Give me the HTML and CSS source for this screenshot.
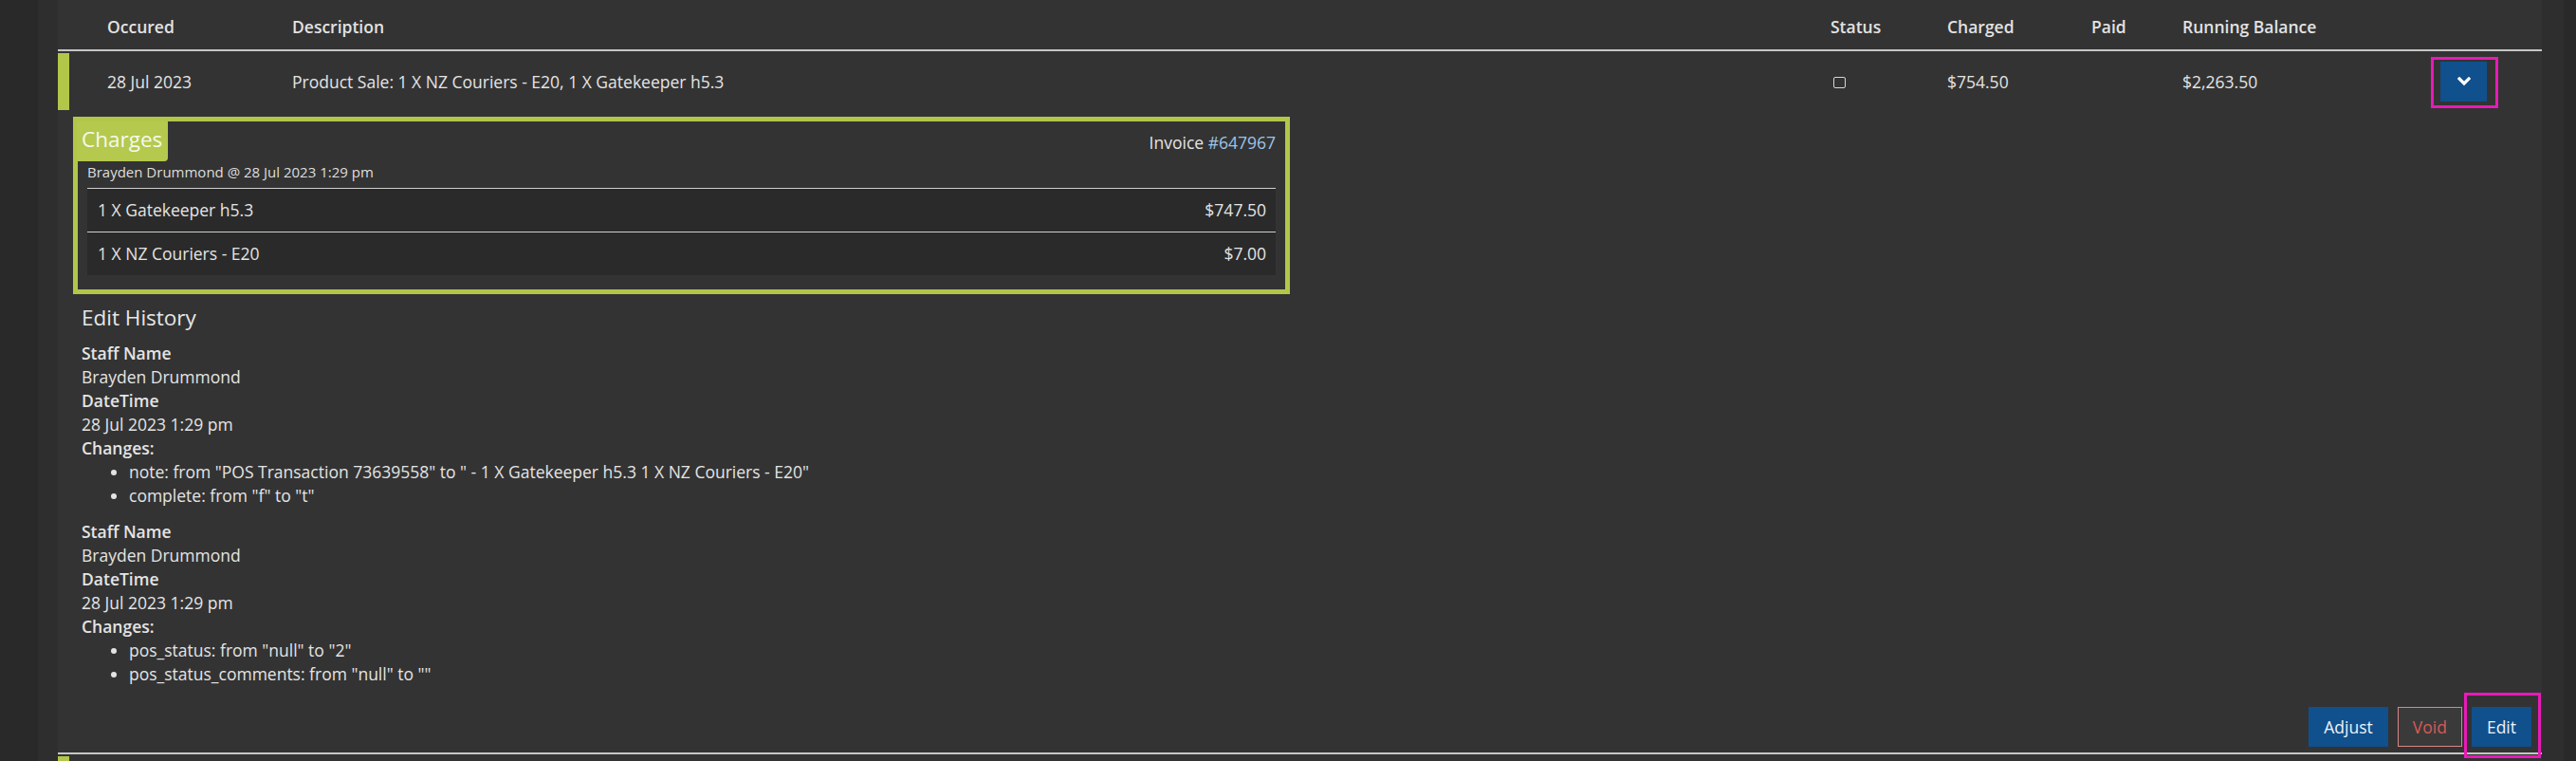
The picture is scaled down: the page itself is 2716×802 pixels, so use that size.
FILE: index.html
```html
<!DOCTYPE html>
<html lang="en">
<head>
<meta charset="utf-8">
<title>Ledger</title>
<link rel="stylesheet" href="styles.css">
</head>
<body>
<div class="page">
  <div class="gutter gutter-outer"></div>
  <div class="gutter gutter-inner"></div>
  <main class="panel">
    <div class="ledger-grid ledger-head">
      <span></span><span></span>
      <span>Occured</span>
      <span>Description</span>
      <span>Status</span>
      <span>Charged</span>
      <span>Paid</span>
      <span>Running Balance</span>
      <span></span>
    </div>

    <div class="entry">
      <div class="ledger-grid entry-row">
        <span class="entry-bar"></span><span></span>
        <span>28 Jul 2023</span>
        <span>Product Sale: 1 X NZ Couriers - E20, 1 X Gatekeeper h5.3</span>
        <span class="status"><span class="checkbox"></span></span>
        <span>$754.50</span>
        <span></span>
        <span>$2,263.50</span>
        <span class="action">
          <button class="btn btn-primary btn-toggle highlight highlight-toggle" type="button" aria-label="Collapse">
            <svg width="14" height="10" viewBox="0 0 14 10"><polyline points="2,2 7,7 12,2" fill="none" stroke="#ffffff" stroke-width="3.2" stroke-linecap="square"/></svg>
          </button>
        </span>
      </div>

      <div class="entry-detail">
        <section class="charges">
          <div class="charges-head">
            <span class="charges-label">Charges</span>
            <span class="invoice">Invoice <a href="#" class="invoice-link">#647967</a></span>
          </div>
          <div class="charges-meta">Brayden Drummond @ 28 Jul 2023 1:29 pm</div>
          <div class="charge-line"><span>1 X Gatekeeper h5.3</span><span>$747.50</span></div>
          <div class="charge-line"><span>1 X NZ Couriers - E20</span><span>$7.00</span></div>
        </section>

        <section class="history">
          <h3 class="history-title">Edit History</h3>
          <div class="history-item">
            <div class="history-label">Staff Name</div>
            <div>Brayden Drummond</div>
            <div class="history-label">DateTime</div>
            <div>28 Jul 2023 1:29 pm</div>
            <div class="history-label">Changes:</div>
            <ul class="history-changes">
              <li>note: from "POS Transaction 73639558" to " - 1 X Gatekeeper h5.3 1 X NZ Couriers - E20"</li>
              <li>complete: from "f" to "t"</li>
            </ul>
          </div>
          <div class="history-item">
            <div class="history-label">Staff Name</div>
            <div>Brayden Drummond</div>
            <div class="history-label">DateTime</div>
            <div>28 Jul 2023 1:29 pm</div>
            <div class="history-label">Changes:</div>
            <ul class="history-changes">
              <li>pos_status: from "null" to "2"</li>
              <li>pos_status_comments: from "null" to ""</li>
            </ul>
          </div>
        </section>

        <div class="entry-actions">
          <button class="btn btn-primary" type="button">Adjust</button>
          <button class="btn btn-void" type="button">Void</button>
          <button class="btn btn-primary highlight highlight-edit" type="button">Edit</button>
        </div>
      </div>
    </div>

    <div class="entry">
      <div class="ledger-grid entry-row">
        <span class="entry-bar"></span>
      </div>
    </div>
  </main>
  <div class="gutter gutter-inner-r"></div>
  <div class="gutter gutter-outer-r"></div>
</div>
</body>
</html>
```

FILE: styles.css
```css
* { box-sizing: border-box; }

html, body {
  margin: 0;
  padding: 0;
  background: #2a2a2a;
}

body {
  font-family: "Open Sans", "Liberation Sans", sans-serif;
  font-size: 17.5px;
  line-height: 25px;
  color: #e4e4e4;
}

.page {
  display: flex;
  height: 802px;
  overflow: hidden;
}

.gutter { flex: none; }
.gutter-outer { width: 40px; background: #292929; }
.gutter-inner { width: 21px; background: #2e2e2e; }
.gutter-inner-r { width: 23px; background: #2e2e2e; }
.gutter-outer-r { width: 13px; background: #292929; }

.panel {
  flex: 1;
  min-width: 0;
  background: #333333;
}

/* ledger table grid */
.ledger-grid {
  display: grid;
  grid-template-columns: 12px 40px 195px 1622px 123px 152px 96px 1fr 107px;
  align-items: center;
}

.ledger-head {
  padding: 16px 0 11px;
  font-weight: 600;
  color: #e2e2e2;
  border-bottom: 2px solid #c6c6c6;
}

.entry {
  border-bottom: 2px solid #c6c6c6;
}

.entry-row {
  height: 64px;
}

.entry-bar {
  align-self: stretch;
  margin: 2px 0;
  background: #b2c64a;
}

.status { padding-left: 3px; display: flex; align-items: center; }

.checkbox {
  display: inline-block;
  width: 13px;
  height: 12px;
  border: 1.5px solid #d6d6d6;
  border-radius: 2px;
  margin-top: 2px;
}

.action { display: flex; }

/* buttons */
.btn {
  font-family: inherit;
  font-size: 17.5px;
  line-height: 25px;
  height: 42px;
  padding: 0 15px;
  border: 1px solid transparent;
  border-radius: 0;
  cursor: pointer;
}

.btn-primary {
  background: #10508d;
  border-color: #10508d;
  color: #ecf2f8;
}

.btn-void {
  background: #3a3a3a;
  border-color: #d98585;
  color: #d65b56;
}

.btn-toggle {
  width: 49px;
  padding: 0;
  display: flex;
  align-items: center;
  justify-content: center;
}

.highlight { position: relative; }
.highlight::after {
  content: "";
  position: absolute;
  border: 3px solid #e81ab8;
  pointer-events: none;
}
.highlight-toggle::after { left: -11px; right: -13px; top: -6px; bottom: -8px; }
.highlight-edit::after { left: -9px; right: -11px; top: -16px; bottom: -13px; }

/* expanded detail */
.entry-detail {
  padding: 5px 0 0 16px;
}

.charges {
  width: 1283px;
  border: 5px solid #b2c64a;
  padding-bottom: 15px;
}

.charges-head {
  display: flex;
  justify-content: space-between;
  align-items: flex-start;
}

.charges-label {
  background: #b4c94d;
  color: #f6f8ee;
  font-size: 22.5px;
  line-height: 37px;
  height: 42px;
  padding: 0 6px 0 4px;
  border-bottom-right-radius: 4px;
}

.invoice {
  margin: 10px 10px 0 0;
}

.invoice-link {
  color: #9dc4e8;
  text-decoration: none;
}

.charges-meta {
  margin: 1px 10px 7px;
  font-size: 15px;
  line-height: 20px;
  color: #dedede;
}

.charge-line {
  margin: 0 10px;
  display: flex;
  justify-content: space-between;
  padding: 10px 10px 10px 11px;
  border-top: 1px solid #cfcfcf;
  background: #2a2a2a;
}

.history {
  margin-left: 9px;
}

.history-title {
  margin: 10px 0 10px;
  font-size: 22.5px;
  line-height: 30px;
  font-weight: 400;
  color: #e6e6e6;
}

.history-item {
  margin-bottom: 13px;
}

.history-label {
  font-weight: 600;
}

.history-changes {
  margin: 0;
  padding-left: 50px;
}

.entry-actions {
  display: flex;
  justify-content: flex-end;
  gap: 10px;
  margin-top: 22px;
  padding: 0 11px 6px 0;
}
```
